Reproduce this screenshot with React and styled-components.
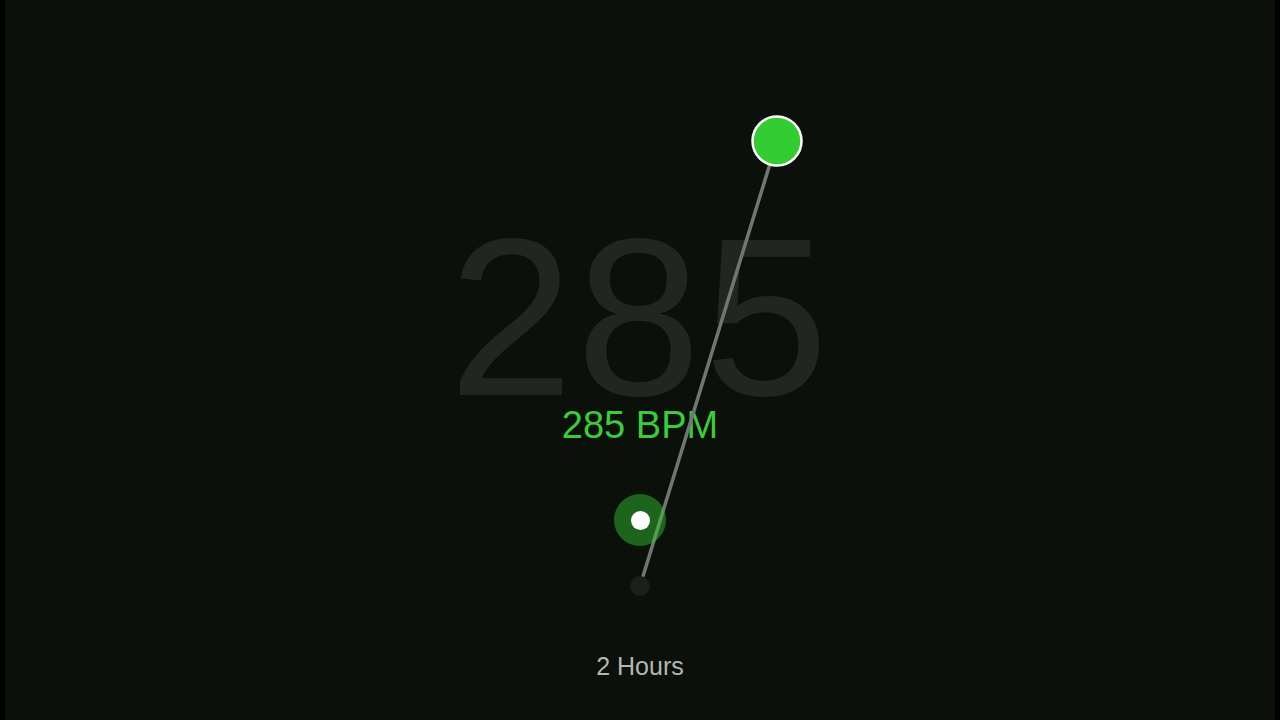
import React from "react";
import styled, { createGlobalStyle } from "styled-components";

const GlobalStyle = createGlobalStyle`
    html, body {
        margin: 0;
        padding: 0;
        background: #000;
        overflow: hidden;
    }
`;

// pendulum geometry, in panel pixels
const pivot = { x: 635, y: 586 };
const bob = { x: 772, y: 141 };

const App = () => {
    return (
        <Frame>
            <GlobalStyle />
            <Panel>
                <BigNumber>285</BigNumber>
                <Bpm>285 BPM</Bpm>
                <Target>
                    <Dot />
                </Target>
                <Duration>2 Hours</Duration>
                <Pendulum width="1270" height="720" viewBox="0 0 1270 720">
                    <line x1={pivot.x} y1={pivot.y} x2={bob.x} y2={bob.y} stroke="#727672" strokeWidth="3.5" strokeLinecap="round" />
                    <circle cx={pivot.x} cy={pivot.y} r="10" fill="#1c1f1c" />
                    <circle cx={bob.x} cy={bob.y} r="24.5" fill="#33cc33" stroke="#ffffff" strokeWidth="2.5" />
                </Pendulum>
            </Panel>
        </Frame>
    );
};

const Frame = styled.div`
    width: 1280px;
    height: 720px;
    background: #000;
    display: flex;
    justify-content: center;
`;

const Panel = styled.main`
    position: relative;
    width: 1270px;
    height: 720px;
    background: #0b100b;
    display: flex;
    flex-direction: column;
    align-items: center;
    font-family: "Liberation Sans", Arial, sans-serif;
`;

const BigNumber = styled.div`
    margin-top: 232px;
    font-size: 224px;
    line-height: 0.76;
    color: #212621;
    letter-spacing: 3px;
`;

const Bpm = styled.div`
    margin-top: 4px;
    font-size: 38px;
    line-height: 1;
    color: #3ccb3c;
    position: relative;
`;

const Target = styled.div`
    position: relative;
    z-index: 1;
    margin-top: 50px;
    width: 52px;
    height: 52px;
    border-radius: 50%;
    background: rgba(51, 204, 51, 0.45);
    display: flex;
    align-items: center;
    justify-content: center;
`;

const Dot = styled.div`
    width: 19px;
    height: 19px;
    border-radius: 50%;
    background: #ffffff;
`;

const Duration = styled.div`
    margin-top: 108px;
    font-size: 25px;
    line-height: 1;
    color: #b4b6b4;
`;

const Pendulum = styled.svg`
    position: absolute;
    left: 0;
    top: 0;
    pointer-events: none;
`;

export default App;
